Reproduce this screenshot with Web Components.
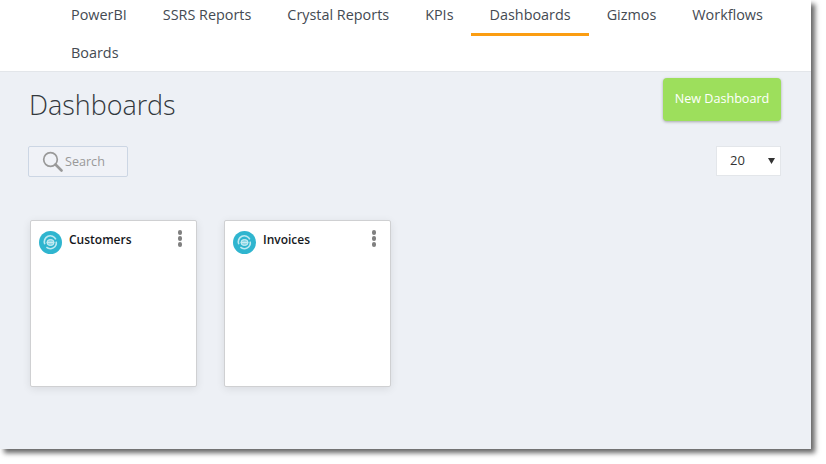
<!DOCTYPE html>
<html>
<head>
<meta charset="utf-8">
<title>Dashboards</title>
<style>
  html, body { margin: 0; height: 100%; background: #fff; overflow: hidden; }
  body { font-family: "Open Sans", "Liberation Sans", sans-serif; }
</style>
</head>
<body>
<app-window>
  <top-nav>
    <nav-item>PowerBI</nav-item>
    <nav-item>SSRS Reports</nav-item>
    <nav-item>Crystal Reports</nav-item>
    <nav-item>KPIs</nav-item>
    <nav-item active>Dashboards</nav-item>
    <nav-item>Gizmos</nav-item>
    <nav-item>Workflows</nav-item>
    <nav-item>Boards</nav-item>
  </top-nav>
  <dash-page title="Dashboards">
    <dash-card>Customers</dash-card>
    <dash-card>Invoices</dash-card>
  </dash-page>
</app-window>

<script>
function define(name, html, init) {
  const tpl = document.createElement("template");
  tpl.innerHTML = html;
  customElements.define(name, class extends HTMLElement {
    constructor() {
      super();
      this.attachShadow({ mode: "open" });
      this.shadowRoot.appendChild(tpl.content.cloneNode(true));
    }
    connectedCallback() {
      if (init) init(this);
    }
  });
}

define("app-window", `
<style>
  :host {
    display: flex;
    flex-direction: column;
    width: 811px;
    height: 449px;
    background: #edf0f5;
    box-shadow: 4px 4px 5px rgba(0, 0, 0, 0.6);
  }
</style>
<slot></slot>
`);

define("top-nav", `
<style>
  :host {
    display: flex;
    flex-wrap: wrap;
    align-content: flex-start;
    box-sizing: border-box;
    height: 72px;
    padding: 0 30px 0 53px;
    background: #fff;
    border-bottom: 1px solid #e3e6ea;
  }
</style>
<slot></slot>
`);

define("nav-item", `
<style>
  :host {
    display: block;
    box-sizing: border-box;
    height: 36px;
    margin-bottom: 2px;
    padding: 5px 18px 0;
    font-size: 14.4px;
    line-height: 19px;
    color: #444a52;
    border-bottom: 3px solid transparent;
  }
  :host([active]) {
    margin-left: -1px;
    padding-left: 19px;
    border-bottom-color: #fb9d12;
  }
</style>
<slot></slot>
`);

define("dash-page", `
<style>
  :host {
    display: block;
    flex: 1;
    padding: 6px 30px 0 28px;
  }
  .head {
    display: flex;
    justify-content: space-between;
    align-items: flex-start;
  }
  h1 {
    margin: 6px 0 0 1px;
    font-size: 26.9px;
    line-height: 42px;
    font-weight: 300;
    color: #33383d;
  }
  .new {
    width: 118px;
    height: 43px;
    border-radius: 4px;
    background: #9ddf5c;
    color: #fff;
    font-size: 12.6px;
    line-height: 41px;
    text-align: center;
    box-shadow: 0 1px 3px rgba(0, 0, 0, 0.3);
  }
  .tools {
    display: flex;
    justify-content: space-between;
    align-items: flex-start;
    margin-top: 20px;
  }
  .search {
    display: flex;
    align-items: center;
    box-sizing: border-box;
    width: 100px;
    height: 31px;
    padding-left: 13px;
    gap: 2px;
    border: 1px solid #ccd6e4;
    border-radius: 2px;
    background: #f0f2f7;
    color: #999;
    font-size: 12.6px;
  }
  .size {
    position: relative;
    box-sizing: border-box;
    width: 65px;
    height: 30px;
    padding-left: 13px;
    border: 1px solid #e3e6ea;
    background: #fff;
    color: #333;
    font-size: 13px;
    line-height: 27px;
  }
  .size svg { position: absolute; right: 5px; top: 11px; }
  .cards {
    display: flex;
    gap: 27px;
    margin: 43px 0 0 2px;
  }
</style>
<div class="head">
  <h1></h1>
  <div class="new">New Dashboard</div>
</div>
<div class="tools">
  <div class="search">
    <svg width="21" height="21" viewBox="0 0 21 21" fill="none" stroke="#999">
      <circle cx="8.5" cy="8.5" r="6.8" stroke-width="1.7"/>
      <path d="M13.5 13.5L19.5 19.5" stroke-width="2.6" stroke-linecap="round"/>
    </svg>
    <span>Search</span>
  </div>
  <div class="size">20
    <svg width="7" height="6" viewBox="0 0 7 6"><path d="M0 0H7L3.5 6Z" fill="#333"/></svg>
  </div>
</div>
<div class="cards"><slot></slot></div>
`, (el) => {
  el.shadowRoot.querySelector("h1").textContent = el.getAttribute("title");
});

define("dash-card", `
<style>
  :host {
    display: block;
    box-sizing: border-box;
    width: 167px;
    height: 167px;
    padding: 8px 8px 0 8px;
    background: #fff;
    border: 1px solid #cfd0d2;
    border-radius: 2px;
    box-shadow: 0 2px 9px rgba(0, 0, 0, 0.09);
  }
  .row { display: flex; align-items: flex-start; }
  .logo { flex: none; width: 23px; height: 23px; margin-top: 2px; }
  .name {
    flex: 1;
    margin: 1px 0 0 7px;
    font-size: 12px;
    line-height: 20px;
    font-weight: 600;
    color: #15181c;
  }
  .menu {
    flex: none;
    display: flex;
    flex-direction: column;
    gap: 1.5px;
    margin: 1px 6px 0 0;
  }
  .menu i { display: block; width: 4.5px; height: 4.5px; border-radius: 50%; background: #808080; }
</style>
<div class="row">
  <svg class="logo" viewBox="0 0 23 23" fill="none">
    <circle cx="11.5" cy="11.5" r="11.5" fill="#2fb5cf"/>
    <path d="M5.8 13.2A6 6 0 0 1 16.8 8.4" stroke="#bfe9f1" stroke-width="1.6"/>
    <path d="M17.2 10.6A6 6 0 0 1 7.4 16.2" stroke="#bfe9f1" stroke-width="1.6"/>
    <ellipse cx="11.5" cy="11.5" rx="3.6" ry="3" fill="#8fd8e6" stroke="#d5f0f5" stroke-width="1"/>
    <path d="M8.2 11.5H14.8" stroke="#d5f0f5" stroke-width="0.8"/>
  </svg>
  <div class="name"><slot></slot></div>
  <div class="menu"><i></i><i></i><i></i></div>
</div>
`);
</script>
</body>
</html>
